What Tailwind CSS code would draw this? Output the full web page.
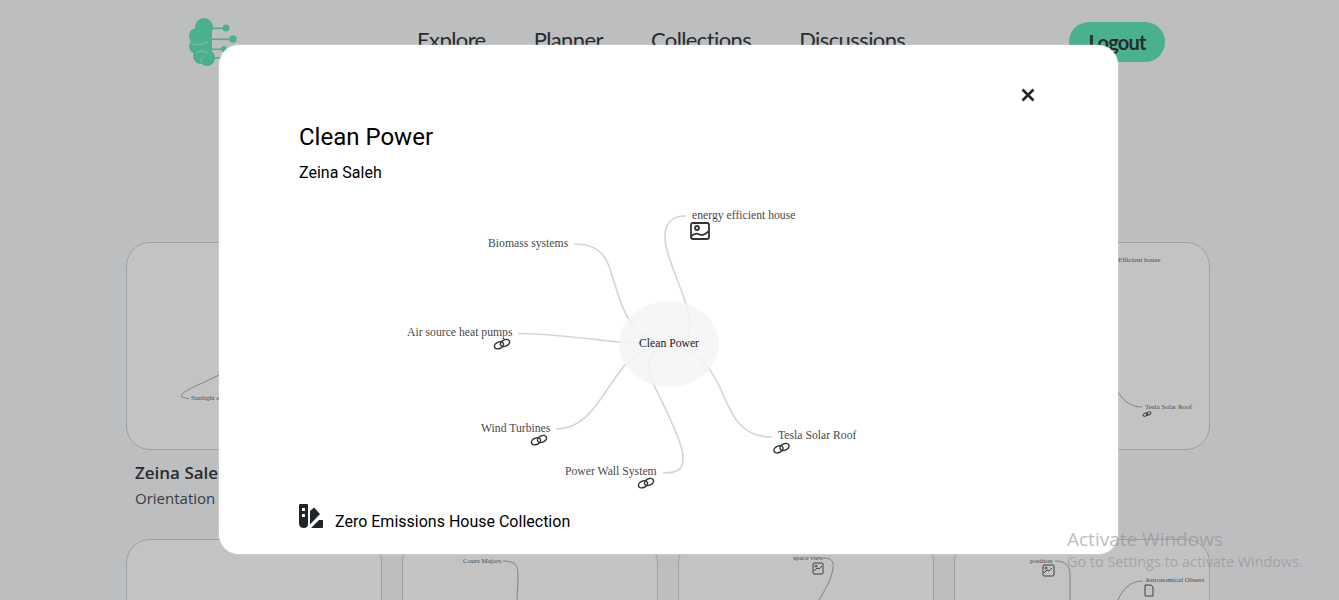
<!DOCTYPE html>
<html>
<head>
<meta charset="utf-8">
<title>Clean Power</title>
<script src="https://cdn.jsdelivr.net/npm/@tailwindcss/browser@4"></script>
</head>
<body class="relative h-[600px] overflow-hidden bg-[#f7f9fb] font-['Roboto',sans-serif]">

    <!-- Page behind the modal -->
    <header class="flex items-start pl-[189px] pr-[174px] pt-[18px] h-[242px]">
        <svg class="w-[48px] h-[48px] shrink-0" viewBox="0 0 48 48" fill="#62e6b7">
            <circle cx="15" cy="9" r="9"/>
            <circle cx="8" cy="18" r="8"/>
            <circle cx="8" cy="28" r="8"/>
            <circle cx="12" cy="38" r="8"/>
            <circle cx="18" cy="40" r="8"/>
            <rect x="10" y="5" width="13" height="36"/>
            <rect x="20" y="9.500" width="17" height="1.600"/>
            <circle cx="37" cy="10" r="3.500"/>
            <rect x="20" y="20.500" width="24" height="1.600"/>
            <circle cx="44" cy="21" r="3.800"/>
            <rect x="20" y="30.500" width="15" height="1.600"/>
            <circle cx="35" cy="31" r="3"/>
            <rect x="20" y="39" width="13" height="1.600"/>
            <circle cx="33" cy="40" r="2.500"/>
            <path d="M0 25c6 2 12 2 19-1M7 36c3-4 8-4 12-1M13 45c-2-3-1-5 2-7" fill="none" stroke="#f7f9fb" stroke-opacity="0.6" stroke-width="1"/>
        </svg>
        <nav class="flex gap-12 ml-[180px] pt-[5px] text-[22px] tracking-[-0.6px] text-[#343a40] font-['Lato',sans-serif]">
            <a>Explore</a>
            <a>Planner</a>
            <a>Collections</a>
            <a>Discussions</a>
        </nav>
        <button class="ml-auto mt-[4px] w-[96px] h-[40px] rounded-full bg-[#62e6b7] text-[20px] tracking-[-0.8px] font-bold text-[#343a40] font-['Lato',sans-serif]">Logout</button>
    </header>

    <main class="grid grid-cols-4 gap-x-5 ml-[126px] w-[1084px]">
        <!-- Row 1 -->
        <div class="h-[297px]">
            <div class="h-[208px] rounded-3xl border border-[#ced4da] bg-white">
                <svg class="w-full h-full" viewBox="127 243 254 206" font-family="Liberation Serif" font-size="7" fill="#666">
                    <path d="M219 375C200 385 178 392 182 397L189 399" fill="none" stroke="#aaa"/>
                    <text x="191" y="400">Sunlight exposure</text>
                </svg>
            </div>
            <p class="mt-[13px] pl-[9px] text-[17px] leading-[20px] font-semibold text-[#343a40] font-['Open_Sans',sans-serif]">Zeina Saleh</p>
            <p class="mt-[5px] pl-[9px] text-[15px] leading-[20px] text-[#495057] font-['Open_Sans',sans-serif]">Orientation</p>
        </div>
        <div class="h-[297px]"><div class="h-[208px] rounded-3xl border border-[#ced4da] bg-white"></div></div>
        <div class="h-[297px]"><div class="h-[208px] rounded-3xl border border-[#ced4da] bg-white"></div></div>
        <div class="h-[297px]">
            <div class="h-[208px] rounded-3xl border border-[#ced4da] bg-white">
                <svg class="w-full h-full" viewBox="955 243 254 206" font-family="Liberation Serif" font-size="7" fill="#666">
                    <text x="1118" y="262">Efficient house</text>
                    <path d="M1118 392C1124 402 1132 407 1142 407" fill="none" stroke="#aaa"/>
                    <text x="1145" y="409">Tesla Solar Roof</text>
                    <g fill="none" stroke="#555"><ellipse cx="1145.500" cy="414.500" rx="2.500" ry="1.500" transform="rotate(-25 1145.500 414.500)"/><ellipse cx="1148.500" cy="413.500" rx="2.500" ry="1.500" transform="rotate(-25 1148.500 413.500)"/></g>
                </svg>
            </div>
        </div>

        <!-- Row 2 -->
        <div class="h-[207px] rounded-3xl border border-[#ced4da] bg-white"></div>
        <div class="h-[207px] rounded-3xl border border-[#ced4da] bg-white">
            <svg class="w-full h-full" viewBox="403 540 254 205" font-family="Liberation Serif" font-size="7" fill="#666">
                <text x="463" y="563">Cours Majors</text>
                <path d="M503 561C515 561 518 565 518 575C518 585 517 595 517 600" fill="none" stroke="#aaa"/>
            </svg>
        </div>
        <div class="h-[207px] rounded-3xl border border-[#ced4da] bg-white">
            <svg class="w-full h-full" viewBox="679 540 254 205" font-family="Liberation Serif" font-size="7" fill="#666">
                <text x="793" y="560">space view</text>
                <path d="M824 558C832 558 834 562 833 568C832 578 825 590 819 600" fill="none" stroke="#aaa"/>
                <g fill="none" stroke="#555"><rect x="813" y="563" width="10" height="11" rx="1"/><path d="M814 571l3-3 2 1 3-3"/><circle cx="816" cy="566" r="1"/></g>
            </svg>
        </div>
        <div class="h-[207px] rounded-3xl border border-[#ced4da] bg-white">
            <svg class="w-full h-full" viewBox="955 540 254 205" font-family="Liberation Serif" font-size="7" fill="#666">
                <text x="1030" y="563">position</text>
                <path d="M1055 561C1066 561 1070 566 1070 575L1070 600" fill="none" stroke="#aaa"/>
                <g fill="none" stroke="#555"><rect x="1043" y="565" width="11" height="11" rx="1"/><path d="M1044 573l3-3 2 1 3-3"/><circle cx="1046" cy="568" r="1"/></g>
                <path d="M1143 581C1130 581 1122 590 1118 600" fill="none" stroke="#aaa"/>
                <text x="1145" y="582">Astronomical Obsers</text>
                <path d="M1145 585h6l2 2v9h-8z" fill="none" stroke="#555"/>
            </svg>
        </div>
    </main>

    <!-- Backdrop -->
    <div class="absolute inset-0 bg-black/[0.235]"></div>

    <!-- Modal -->
    <section class="absolute left-[219px] top-[45px] w-[899px] h-[509px] rounded-[20px] bg-white shadow-[0_0_2px_rgba(255,255,255,0.6)] pl-[80px] pr-[80px] pt-[77px] flex flex-col">
        <button class="absolute right-[82px] top-[42px] w-[16px] h-[16px]">
            <svg viewBox="0 0 16 16" class="w-full h-full" fill="none" stroke="#212529" stroke-width="2.600"><path d="M2.500 2.500l11 11M13.500 2.500l-11 11"/></svg>
        </button>
        <h2 class="text-[24px] leading-[30px] text-black">Clean Power</h2>
        <p class="mt-[11px] text-[16px] leading-[20px] text-black">Zeina Saleh</p>

        <!-- Mind map -->
        <svg class="w-[739px] h-[295px] mt-[17px] shrink-0" viewBox="299 200 739 295" font-family="Liberation Serif" font-size="11.700" fill="#4a4a4a">
            <g fill="none" stroke="#d6d6d6" stroke-width="1.700">
                <path d="M686 216C672 216 665 222 665 237C665 260 690 300 690 327C690 335 684 342 669 344"/>
                <path d="M574 244C592 244 603 250 609 266C616 285 620 310 635 328C645 338 655 342 669 344"/>
                <path d="M518 333.500C555 334 590 339 619 342L669 344"/>
                <path d="M556 429C590 429 600 395 625 365C640 350 655 346 669 344"/>
                <path d="M663 473C680 473 683 468 683 458C683 440 660 400 652 380C645 365 650 350 669 344"/>
                <path d="M772 437C740 437 732 415 722 392C715 375 700 350 669 344"/>
            </g>
            <ellipse cx="669" cy="344" rx="50" ry="43" fill="#f3f4f6" fill-opacity="0.85"/>
            <text x="669" y="347" text-anchor="middle" fill="#222">Clean Power</text>

            <text x="692" y="219">energy efficient house</text>
            <g fill="none" stroke="#333" stroke-width="1.800">
                <rect x="691" y="223" width="18" height="16" rx="2"/>
                <circle cx="697" cy="228" r="2"/>
                <path d="M691.500 236c3-3 5-3 8-1.500s5 0 9-3"/>
            </g>

            <text x="488" y="247">Biomass systems</text>
            <text x="407" y="336">Air source heat pumps</text>
            <text x="481" y="432">Wind Turbines</text>
            <text x="565" y="475">Power Wall System</text>
            <text x="778" y="439">Tesla Solar Roof</text>

            <g fill="none" stroke="#333" stroke-width="1.500">
                <ellipse cx="499" cy="345.300" rx="4.800" ry="3.200" transform="rotate(-25 499 345.300)"/>
                <ellipse cx="505" cy="343" rx="4.800" ry="3.200" transform="rotate(-25 505 343)"/>
                <ellipse cx="536" cy="441.300" rx="4.800" ry="3.200" transform="rotate(-25 536 441.300)"/>
                <ellipse cx="542" cy="439" rx="4.800" ry="3.200" transform="rotate(-25 542 439)"/>
                <ellipse cx="643" cy="484.300" rx="4.800" ry="3.200" transform="rotate(-25 643 484.300)"/>
                <ellipse cx="649" cy="482" rx="4.800" ry="3.200" transform="rotate(-25 649 482)"/>
                <ellipse cx="778.500" cy="449.300" rx="4.800" ry="3.200" transform="rotate(-25 778.500 449.300)"/>
                <ellipse cx="784.500" cy="447" rx="4.800" ry="3.200" transform="rotate(-25 784.500 447)"/>
            </g>
        </svg>

        <div class="flex items-start gap-3 mt-[9px]">
            <svg class="w-[24px] h-[24px] shrink-0" viewBox="0 0 24 24" fill="#212529">
                <path fill-rule="evenodd" d="M1 0h7a1 1 0 0 1 1 1v19a4 4 0 0 1-4 4 5 5 0 0 1-5-4V1a1 1 0 0 1 1-1zM3 4v3h3V4zM3 10v3h3v-3z"/>
                <path d="M11 7l4-3.500 6 6.500-10 10.500z"/>
                <path d="M12 24l8-8h4v7a1 1 0 0 1-1 1z"/>
            </svg>
            <span class="mt-[8px] text-[16px] leading-[19px] text-black">Zero Emissions House Collection</span>
        </div>
    </section>

    <!-- Windows activation watermark -->
    <div class="absolute left-[1067px] top-[526px] text-[#8f9092]/60 font-['Open_Sans',sans-serif] pointer-events-none">
        <p class="text-[19px] leading-[26px]">Activate Windows</p>
        <p class="text-[14.400px] leading-[20px]">Go to Settings to activate Windows.</p>
    </div>
</body>
</html>
